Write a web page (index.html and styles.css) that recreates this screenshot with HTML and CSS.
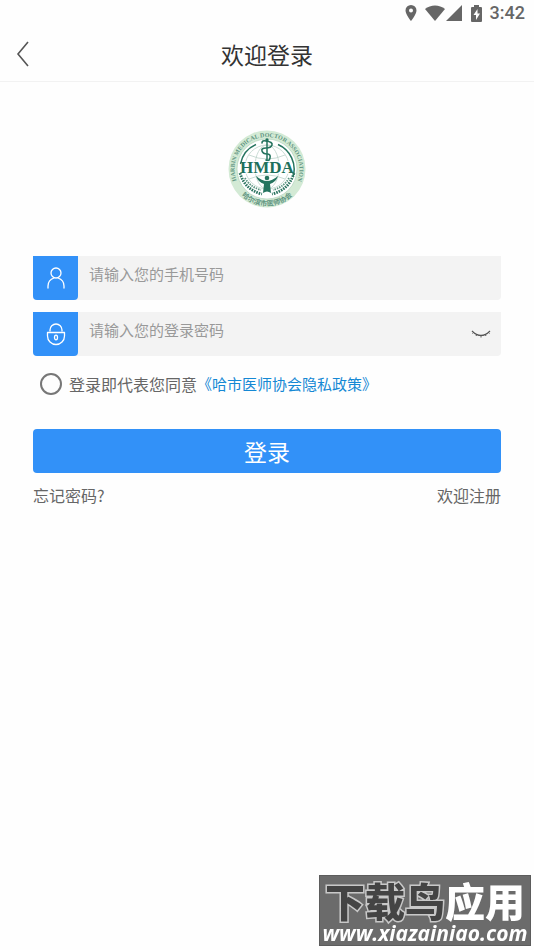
FILE: index.html
```html
<!DOCTYPE html>
<html lang="zh-CN">
<head>
    <meta charset="UTF-8">
    <meta name="viewport" content="width=device-width, initial-scale=1.0">
    <title>欢迎登录</title>
    <link rel="stylesheet" href="styles.css">
</head>
<body>
    <div class="status-bar">
        <svg class="icon-pin" width="12" height="16" viewBox="0 0 12 16">
            <path fill="#666" fill-rule="evenodd" d="M6 0a5.5 5.5 0 0 0-5.5 5.5C.5 9.500 6 16 6 16s5.500-6.500 5.500-10.500A5.500 5.500 0 0 0 6 0zm0 3.500a2 2 0 1 1 0 4 2 2 0 0 1 0-4z"/>
        </svg>
        <svg class="icon-wifi" width="20" height="16" viewBox="0 0 20 16">
            <path fill="#666" d="M0 4C5.500-.8 14.500-.8 20 4L10 16z"/>
        </svg>
        <svg class="icon-signal" width="16" height="16" viewBox="0 0 16 16">
            <path fill="#666" d="M16 0v16H0z"/>
        </svg>
        <svg class="icon-battery" width="11" height="17" viewBox="0 0 11 17">
            <path fill="#666" fill-rule="evenodd" d="M3 0h5v2h2q1 0 1 1v13q0 1-1 1H1q-1 0-1-1V3q0-1 1-1h2zM6.500 4L2.500 10H5v5l4-6.500H6.500z"/>
        </svg>
        <span class="time">3:42</span>
    </div>

    <header class="header">
        <button class="back" type="button" aria-label="返回">
            <svg width="14" height="26" viewBox="0 0 14 26">
                <path d="M13 1L3 13l10 12" fill="none" stroke="#555" stroke-width="1.600"/>
            </svg>
        </button>
        <h1 class="title">欢迎登录</h1>
    </header>

    <main class="content">
        <svg class="logo" width="80" height="80" viewBox="0 0 80 80">
            <defs>
                <path id="ring-top" d="M13 58.500A32.500 32.500 0 1 1 67 58.500"/>
                <path id="ring-bottom" d="M10.300 62A37 37 0 0 0 69.700 62"/>
            </defs>
            <circle cx="40" cy="40" r="38.500" fill="#d3ead5"/>
            <circle cx="40" cy="40" r="30" fill="#fff" stroke="#a9cdb5" stroke-width=".6"/>
            <g fill="none" stroke="#bdd3ca" stroke-width=".8">
                <circle cx="40" cy="38" r="22"/>
                <ellipse cx="40" cy="38" rx="12" ry="22"/>
                <path d="M22 26q18 8 36 0M18 38h44M22 50q18-8 36 0"/>
            </g>
            <path d="M29 15.500A27 27 0 0 0 13.500 35M51 15.500A27 27 0 0 1 66 48" fill="none" stroke="#25745f" stroke-width="1.500"/>
            <!-- laurel -->
            <g fill="none" stroke="#2d7561" stroke-width="2.800" stroke-dasharray="1.600 1">
                <path d="M13 44Q18 61 35 65M67 44Q62 61 45 65"/>
            </g>
            <g fill="none" stroke="#5b9580" stroke-width="1.800" stroke-dasharray="1.500 1">
                <path d="M18 49Q23 58 34 61M62 49Q57 58 46 61"/>
            </g>
            <!-- staff and snake -->
            <g fill="none" stroke="#25745f" stroke-linecap="round">
                <path d="M40 11v20" stroke-width="1.500"/>
                <path d="M35 14q0-3 4-2 7 1 6 4t-6 3-4 3 5 3 3 4-4 2" stroke-width="1.600"/>
            </g>
            <circle cx="40" cy="11" r="1.700" fill="#25745f"/>
            <rect x="16" y="32" width="48" height="13" fill="#fff" fill-opacity=".8"/>
            <text class="logo-name" x="40" y="44" text-anchor="middle">HMDA</text>
            <circle cx="40" cy="49" r="2.300" fill="#25745f"/>
            <path fill="#25745f" d="M29 47q6 5 11 5t11-5q-2 6-8 8l1 9q-4-3-8 0l1-9q-6-2-8-8z"/>
            <text class="logo-ring"><textPath href="#ring-top" startOffset="50%" text-anchor="middle">HARBIN MEDICAL DOCTOR ASSOCIATION</textPath></text>
            <text class="logo-ring-cn"><textPath href="#ring-bottom" startOffset="50%" text-anchor="middle">哈尔滨市医师协会</textPath></text>
        </svg>

        <form class="login-form">
            <div class="field">
                <label class="field-icon" for="phone" aria-label="手机号码">
                    <svg width="20" height="24" viewBox="0 0 20 24">
                        <g fill="none" stroke="#fff" stroke-width="1.300" stroke-linecap="round">
                            <circle cx="10" cy="7" r="5"/>
                            <path d="M2 22v-2c0-4 3-7 6-8M18 22v-2c0-4-3-7-6-8"/>
                        </g>
                    </svg>
                </label>
                <input class="field-input" id="phone" type="tel" placeholder="请输入您的手机号码">
            </div>
            <div class="field">
                <label class="field-icon" for="password" aria-label="登录密码">
                    <svg width="20" height="24" viewBox="0 0 20 24">
                        <g fill="none" stroke="#fff" stroke-width="1.300">
                            <path d="M4 9V8a6 6 0 0 1 12 0v1" stroke-linecap="round"/>
                            <path d="M1.500 10.500h17V14a8.500 8.500 0 0 1-17 0z" stroke-linejoin="round"/>
                            <ellipse cx="10" cy="15.500" rx="1.500" ry="2.300"/>
                        </g>
                    </svg>
                </label>
                <input class="field-input" id="password" type="password" placeholder="请输入您的登录密码">
                <button class="eye" type="button" aria-label="显示密码">
                    <svg width="20" height="10" viewBox="0 0 20 10">
                        <path d="M1 2q9 9 18 0" fill="none" stroke="#555" stroke-width="1.200"/>
                        <path d="M3 3L1.500 4.500M6 5L5 7M10 6v2.500M14 5l1 2M17 3l1.500 1.500" stroke="#555" stroke-width="1"/>
                    </svg>
                </button>
            </div>

            <div class="agree">
                <input class="agree-radio" id="agree" type="radio">
                <label for="agree">登录即代表您同意</label><a class="policy" href="#">《哈市医师协会隐私政策》</a>
            </div>

            <button class="submit" type="submit">登录</button>

            <div class="links">
                <a href="#">忘记密码?</a>
                <a href="#">欢迎注册</a>
            </div>
        </form>
    </main>

    <div class="watermark">
        <div class="watermark-name"><span class="dark">下载鸟</span>应用</div>
        <div class="watermark-url">www.xiazainiao.com</div>
    </div>
</body>
</html>
```
FILE: styles.css
```css
* {
    box-sizing: border-box;
}

body {
    margin: 0;
    min-height: 100vh;
    background: #fefefe;
    color: #666;
    font-family: "Noto Sans CJK SC", sans-serif;
    font-size: 16px;
    line-height: 24px;
}

a {
    color: inherit;
    text-decoration: none;
}

button {
    padding: 0;
    border: none;
    background: none;
    font-family: inherit;
    cursor: pointer;
}

svg {
    display: block;
}

.status-bar {
    display: flex;
    align-items: center;
    justify-content: flex-end;
    height: 26px;
    padding-right: 9px;
}

.icon-wifi {
    margin-left: 8px;
}

.icon-signal {
    margin-left: 1px;
}

.icon-battery {
    margin: 0 8px 0 9px;
}

.time {
    font-family: Roboto, sans-serif;
    font-size: 18px;
    font-weight: 500;
}

.header {
    display: grid;
    grid-template-columns: 44px 1fr 44px;
    align-items: center;
    height: 56px;
    border-bottom: 1px solid #f2f2f2;
}

.back {
    display: flex;
    justify-content: center;
}

.title {
    margin: 0;
    color: #333;
    font-size: 23px;
    font-weight: 400;
    text-align: center;
}

.content {
    padding: 47px 33px 0;
}

.logo {
    margin: 0 auto 47px;
}

.logo-name {
    fill: #20705c;
    font-family: "Liberation Serif", serif;
    font-size: 17px;
    font-weight: 700;
}

.logo-ring {
    fill: #5f9581;
    font-family: "Liberation Serif", serif;
    font-size: 6px;
    font-weight: 700;
}

.logo-ring-cn {
    fill: #5f9581;
    font-size: 7px;
    font-weight: 700;
}

.field {
    display: flex;
    height: 44px;
    margin-bottom: 12px;
    background: #f3f3f3;
    border-radius: 0 0 4px 4px;
}

.field-icon {
    display: flex;
    align-items: center;
    justify-content: center;
    width: 45px;
    background: #3291f8;
    border-radius: 0 0 4px 4px;
}

.field-input {
    flex: 1;
    min-width: 0;
    padding: 0 11px 10px;
    border: none;
    outline: none;
    background: none;
    color: #333;
    font-family: inherit;
    font-size: 15px;
}

.field-input::placeholder {
    color: #999;
}

.eye {
    padding: 0 10px;
}

.agree {
    display: flex;
    align-items: center;
    margin-top: 16px;
    padding-left: 7px;
}

.agree-radio {
    appearance: none;
    width: 22px;
    height: 22px;
    margin: 0 7px 0 0;
    border: 2px solid #777;
    border-radius: 50%;
}

.agree-radio:checked {
    background: #3291f8;
}

.policy {
    color: #1588d4;
    font-size: 15px;
}

.submit {
    display: block;
    width: 100%;
    height: 44px;
    margin: 33px 0 10px;
    background: #3291f8;
    border-radius: 4px;
    color: #fff;
    font-size: 23px;
}

.links {
    display: flex;
    justify-content: space-between;
}

.watermark {
    position: fixed;
    right: 3px;
    bottom: 4px;
    width: 212px;
    height: 71px;
    background: #6b6b6b;
    border: 1px solid #5c5c5c;
    color: #fff;
    font-weight: 900;
    text-align: center;
    white-space: nowrap;
}

.watermark-name {
    height: 44px;
    font-size: 40px;
    line-height: 48px;
}

.dark {
    color: #444;
    -webkit-text-stroke: 3px #c8c8c8;
    paint-order: stroke fill;
}

.watermark-url {
    font-family: "Open Sans", sans-serif;
    font-size: 21px;
    font-style: italic;
    font-weight: 700;
    line-height: 26px;
}
```
